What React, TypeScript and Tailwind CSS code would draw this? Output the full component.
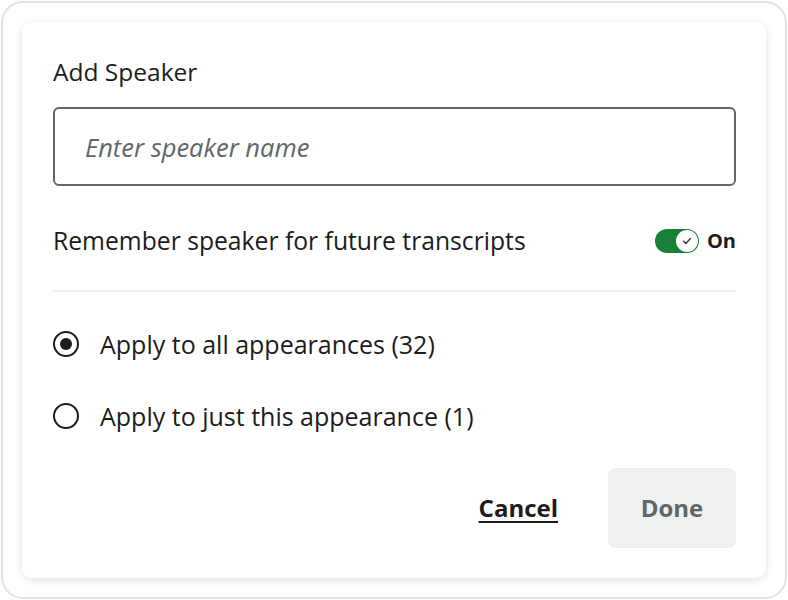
import { useState } from "react";

function Radio({ checked }: { checked: boolean }) {
  return (
    <span className="inline-flex h-[26px] w-[26px] shrink-0 items-center justify-center rounded-full border-2 border-[#1c1c1c] bg-white">
      {checked && <span className="h-[12px] w-[12px] rounded-full bg-[#1c1c1c]" />}
    </span>
  );
}

export default function App() {
  const [remember, setRemember] = useState(true);
  const [scope, setScope] = useState<"all" | "one">("all");

  return (
    <div className="h-[600px] w-[788px] bg-white p-px font-['Open_Sans',sans-serif] text-[#1c1c1c]">
      <div className="h-full w-full rounded-[22px] border-2 border-[#e2e2e2] bg-white px-[19px] py-[19px]">
        <div className="flex h-[556px] flex-col rounded-[10px] bg-white pl-[31px] pr-[30px] pt-[26px] shadow-[0_2px_10px_rgba(0,0,0,0.12)]">
          <label className="text-[24.5px] leading-[48px]">Add Speaker</label>
          <input
            placeholder="Enter speaker name"
            className="mt-[11px] h-[79px] w-full rounded-[6px] border-2 border-[#5f6769] px-[30px] text-[25.5px] outline-none placeholder:italic placeholder:text-[#5f6769]"
          />

          <div className="mt-[33px] flex items-center justify-between pb-[27px]">
            <span className="text-[24.7px] leading-[44px]">Remember speaker for future transcripts</span>
            <button
              onClick={() => setRemember(!remember)}
              className="flex items-center gap-[8px]"
            >
              <span className="flex h-[24px] w-[44px] items-center justify-end rounded-full bg-[#1a7f37] pr-[1px]">
                <span className="flex h-[22px] w-[22px] items-center justify-center rounded-full bg-white">
                  <svg width="12" height="12" viewBox="0 0 12 12" fill="none">
                    <path d="M2.5 6.2l2.4 2.3 4.6-5" stroke="#3a3a3a" strokeWidth="1.4" strokeLinecap="round" strokeLinejoin="round" />
                  </svg>
                </span>
              </span>
              <span className="text-[20px] font-bold">{remember ? "On" : "Off"}</span>
            </button>
          </div>

          <div className="h-[2px] bg-[#f0f0f0]" />

          <div className="mt-[30px] flex flex-col gap-[28px]">
            <button onClick={() => setScope("all")} className="flex items-center gap-[21px] text-left">
              <Radio checked={scope === "all"} />
              <span className="text-[25px] leading-[44px]">Apply to all appearances (32)</span>
            </button>
            <button onClick={() => setScope("one")} className="flex items-center gap-[21px] text-left">
              <Radio checked={scope === "one"} />
              <span className="text-[25px] leading-[44px]">Apply to just this appearance (1)</span>
            </button>
          </div>

          <div className="mt-[30px] flex items-center justify-end gap-[50px]">
            <button className="text-[24px] font-bold underline underline-offset-[4px]">Cancel</button>
            <button className="h-[80px] w-[128px] rounded-[8px] bg-[#eff0f0] text-[24px] font-bold text-[#5f6769]">
              Done
            </button>
          </div>
        </div>
      </div>
    </div>
  );
}
